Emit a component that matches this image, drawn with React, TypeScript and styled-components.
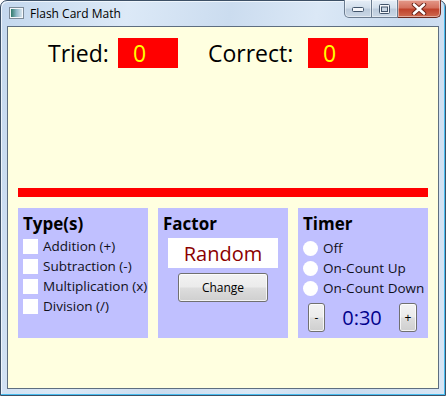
import * as React from 'react'
import styled, { createGlobalStyle } from 'styled-components'

const GlobalStyle = createGlobalStyle`
  html, body {
    margin: 0;
    padding: 0;
    background: #ffffff;
  }

  body {
    font-family: 'Open Sans', 'Noto Sans', sans-serif;
  }
`

const Window = styled.div`
  width: 446px;
  height: 396px;
  box-sizing: border-box;

  display: flex;
  flex-direction: column;
  padding: 0 6px 6px;

  border: 1px solid #3d5066;
  border-radius: 7px 7px 0 0;
  background: linear-gradient(100deg, #c4d8ee 0%, #dce9f7 25%, #cbdcef 45%, #dbe8f6 62%, #c9dbef 80%, #d8e6f5 100%);
  box-shadow: inset -1px -1px 0 #49bdf0, inset 1px 1px 0 #eef5fc;
`

const TitleBar = styled.header`
  height: 25px;
  display: flex;
  align-items: flex-start;
`

const AppIcon = styled.svg`
  margin: 6px 6px 0 2px;
  flex: none;
`

const TitleText = styled.span`
  margin-top: 5px;
  font-size: 12px;
  line-height: 16px;
  color: #000000;
  flex: 1;
`

const CaptionGroup = styled.div`
  display: flex;
  margin: -1px -2px 0 0;
  height: 18px;
`

const CaptionButton = styled.div<{ $w: number; $close?: boolean; $first?: boolean }>`
  width: ${props => props.$w}px;
  height: 18px;
  box-sizing: border-box;

  display: flex;
  align-items: center;
  justify-content: center;

  border: 1px solid ${props => props.$close ? '#6b2a1f' : '#6b7c90'};
  border-top: none;
  border-left: ${props => props.$first ? '1px solid #6b7c90' : 'none'};
  border-radius: ${props => props.$close ? '0 0 5px 0' : props.$first ? '0 0 0 5px' : '0'};
  background: ${props => props.$close
    ? 'linear-gradient(#e49a8b 0%, #d5725f 45%, #c0432c 55%, #cf6b50 100%)'
    : 'linear-gradient(#e6eef7 0%, #d3dfec 45%, #bccbdc 55%, #cbd8e6 100%)'};
  box-shadow: inset 0 0 0 1px rgba(255, 255, 255, 0.45);
`

const Client = styled.main`
  flex: 1;
  display: flex;
  flex-direction: column;
  padding: 11px 10px 0;

  border: 1px solid #5e6e80;
  background: #ffffe0;
`

const ScoreRow = styled.div`
  display: flex;
  align-items: center;
  height: 30px;
  padding-left: 30px;
`

const ScoreLabel = styled.span<{ $w: number }>`
  width: ${props => props.$w}px;
  font-size: 23px;
  line-height: 30px;
  color: #000000;
`

const ScoreBox = styled.div<{ $after?: number }>`
  width: 60px;
  height: 30px;
  box-sizing: border-box;
  padding-left: 15px;
  margin-right: ${props => props.$after ?? 0}px;

  background: #ff0000;
  color: #ffff00;
  font-size: 23px;
  line-height: 30px;
`

const RedBar = styled.div`
  margin-top: 120px;
  height: 9px;
  background: #ff0000;
`

const PanelGrid = styled.div`
  margin-top: 11px;
  display: grid;
  grid-template-columns: repeat(3, 130px);
  gap: 10px;
`

const Panel = styled.section`
  height: 130px;
  box-sizing: border-box;
  padding: 4px 5px 0;

  display: flex;
  flex-direction: column;
  background: #c0c0ff;
`

const PanelTitle = styled.h3`
  margin: 0;
  height: 24px;
  font-size: 17px;
  line-height: 24px;
  font-weight: bold;
  color: #000000;
`

const OptionList = styled.div<{ $shift?: number }>`
  display: flex;
  flex-direction: column;
  margin-top: ${props => props.$shift ?? 0}px;
`

const OptionRow = styled.label`
  height: 20px;
  display: flex;
  align-items: center;
  gap: 5px;

  font-size: 13.5px;
  color: #10101a;
  white-space: nowrap;
`

const CheckBox = styled.span`
  width: 15px;
  height: 15px;
  flex: none;
  background: #ffffff;
`

const RadioDot = styled.span`
  width: 15px;
  height: 15px;
  flex: none;
  border-radius: 50%;
  background: #ffffff;
`

const FactorValue = styled.div`
  margin: 2px 5px 0;
  height: 30px;

  display: flex;
  align-items: center;
  justify-content: center;

  background: #ffffff;
  color: #8b0000;
  font-size: 20px;
`

const VistaButton = styled.button<{ $w: number }>`
  width: ${props => props.$w}px;
  height: 29px;
  padding: 0;

  border: 1px solid #707070;
  border-radius: 3px;
  background: linear-gradient(#f3f3f3 0%, #ebebeb 48%, #dddddd 52%, #cfcfcf 100%);
  box-shadow: inset 0 0 0 1px rgba(255, 255, 255, 0.75);

  font-family: 'Open Sans', 'Noto Sans', sans-serif;
  font-size: 12px;
  color: #000000;
`

const ChangeButton = styled(VistaButton)`
  align-self: center;
  margin-top: 5px;
`

const TimerRow = styled.div`
  margin-top: 5px;
  padding: 0 6px 0 5px;

  display: flex;
  align-items: center;
  justify-content: space-between;
`

const TimerValue = styled.span`
  font-size: 20px;
  color: #00008b;
`

const types = ['Addition (+)', 'Subtraction (-)', 'Multiplication (x)', 'Division (/)']
const timerModes = ['Off', 'On-Count Up', 'On-Count Down']

export default function App (): React.ReactElement {
  return (
    <>
      <GlobalStyle />
      <Window>
        <TitleBar>
          <AppIcon width='15' height='12' viewBox='0 0 15 12'>
            <defs>
              <linearGradient id='ic' x1='0' x2='1'>
                <stop offset='0' stopColor='#2f7a6a' />
                <stop offset='0.5' stopColor='#8fb8c8' />
                <stop offset='1' stopColor='#d8e4ee' />
              </linearGradient>
            </defs>
            <rect x='0.5' y='0.5' width='14' height='11' fill='#f4f7fa' stroke='#7d8b99' />
            <rect x='2' y='2' width='11' height='8' fill='url(#ic)' />
          </AppIcon>
          <TitleText>Flash Card Math</TitleText>
          <CaptionGroup>
            <CaptionButton $w={28} $first>
              <svg width='12' height='6' viewBox='0 0 12 6'>
                <rect x='0.5' y='1.5' width='11' height='4' rx='1' fill='#f4f7fb' stroke='#42546a' />
              </svg>
            </CaptionButton>
            <CaptionButton $w={26}>
              <svg width='11' height='10' viewBox='0 0 11 10'>
                <rect x='0.5' y='0.5' width='10' height='9' rx='1' fill='#f4f7fb' stroke='#42546a' />
                <rect x='2.5' y='3' width='6' height='4.5' fill='#c8d5e3' stroke='#42546a' />
              </svg>
            </CaptionButton>
            <CaptionButton $w={43} $close>
              <svg width='16' height='12' viewBox='0 0 16 12'>
                <path d='M3 1.5 L13 10.5 M13 1.5 L3 10.5' stroke='#6b2418' strokeWidth='4.5' strokeLinecap='round' />
                <path d='M3 1.5 L13 10.5 M13 1.5 L3 10.5' stroke='#ffffff' strokeWidth='2.6' strokeLinecap='round' />
              </svg>
            </CaptionButton>
          </CaptionGroup>
        </TitleBar>

        <Client>
          <ScoreRow>
            <ScoreLabel $w={70}>Tried:</ScoreLabel>
            <ScoreBox $after={30}>0</ScoreBox>
            <ScoreLabel $w={100}>Correct:</ScoreLabel>
            <ScoreBox>0</ScoreBox>
          </ScoreRow>

          <RedBar />

          <PanelGrid>
            <Panel>
              <PanelTitle>Type(s)</PanelTitle>
              <OptionList>
                {types.map(t => (
                  <OptionRow key={t}><CheckBox />{t}</OptionRow>
                ))}
              </OptionList>
            </Panel>

            <Panel>
              <PanelTitle>Factor</PanelTitle>
              <FactorValue>Random</FactorValue>
              <ChangeButton $w={90}>Change</ChangeButton>
            </Panel>

            <Panel>
              <PanelTitle>Timer</PanelTitle>
              <OptionList $shift={2}>
                {timerModes.map(m => (
                  <OptionRow key={m}><RadioDot />{m}</OptionRow>
                ))}
              </OptionList>
              <TimerRow>
                <VistaButton $w={17}>-</VistaButton>
                <TimerValue>0:30</TimerValue>
                <VistaButton $w={18}>+</VistaButton>
              </TimerRow>
            </Panel>
          </PanelGrid>
        </Client>
      </Window>
    </>
  )
}
